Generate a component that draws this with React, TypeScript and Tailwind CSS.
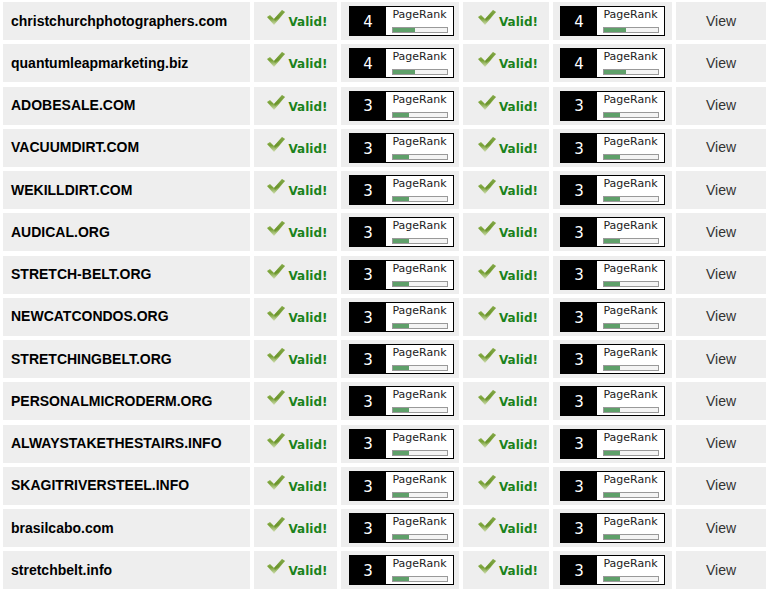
import React from 'react';

type Row = { domain: string; rank: number };

const rows: Row[] = [
  { domain: 'christchurchphotographers.com', rank: 4 },
  { domain: 'quantumleapmarketing.biz', rank: 4 },
  { domain: 'ADOBESALE.COM', rank: 3 },
  { domain: 'VACUUMDIRT.COM', rank: 3 },
  { domain: 'WEKILLDIRT.COM', rank: 3 },
  { domain: 'AUDICAL.ORG', rank: 3 },
  { domain: 'STRETCH-BELT.ORG', rank: 3 },
  { domain: 'NEWCATCONDOS.ORG', rank: 3 },
  { domain: 'STRETCHINGBELT.ORG', rank: 3 },
  { domain: 'PERSONALMICRODERM.ORG', rank: 3 },
  { domain: 'ALWAYSTAKETHESTAIRS.INFO', rank: 3 },
  { domain: 'SKAGITRIVERSTEEL.INFO', rank: 3 },
  { domain: 'brasilcabo.com', rank: 3 },
  { domain: 'stretchbelt.info', rank: 3 },
];

function Check() {
  return (
    <svg width="20" height="18" viewBox="0 0 20 18" className="shrink-0">
      <defs>
        <linearGradient id="chk" x1="0" y1="0" x2="0" y2="1">
          <stop offset="0" stopColor="#b5cf7c" />
          <stop offset="0.55" stopColor="#76a034" />
          <stop offset="1" stopColor="#d3dfb6" />
        </linearGradient>
      </defs>
      <path d="M1 8 L4 6 L8 10 L16 1 L19 3 L8 16 Z" fill="url(#chk)" />
      <path d="M8 10 L16 1 L19 3 L9 12 Z" fill="#5f8a22" opacity="0.55" />
    </svg>
  );
}

function Valid() {
  return (
    <div className="flex items-center justify-center gap-[2px] pl-[3px]">
      <div className="-mt-[6px]">
        <Check />
      </div>
      <span className="mt-[2px] font-['DejaVu_Sans',sans-serif] text-[12px] font-bold text-[#1b821b]">Valid!</span>
    </div>
  );
}

function PageRank({ rank }: { rank: number }) {
  return (
    <div className="flex h-[30px] w-[105px]">
      <div className="flex w-[36px] items-center justify-center bg-black pl-[2px] pt-[2px] font-['DejaVu_Sans',sans-serif] text-[15px] text-white">
        {rank}
      </div>
      <div className="flex flex-1 flex-col items-center border border-black bg-white">
        <span className="mt-[1px] font-['DejaVu_Sans',sans-serif] text-[11px] leading-[14px] text-[#222]">PageRank</span>
        <div className="mt-[5px] h-[6px] w-[56px] border border-[#999] bg-[#f4f4f4]">
          <div className="h-full bg-[#5fa06a]" style={{ width: rank * 5.5 }} />
        </div>
      </div>
    </div>
  );
}

export default function App() {
  return (
    <div className="min-h-[589px] bg-white pl-[3px] pt-[2px]">
      <div className="flex flex-col gap-[4.25px]">
        {rows.map((r) => (
          <div key={r.domain} className="flex h-[38px] gap-[4px]">
            <div className="flex w-[247px] items-center bg-[#eeeeee] pl-[8px] font-['Liberation_Sans',Arial,sans-serif] text-[14px] font-bold text-black">
              {r.domain}
            </div>
            <div className="flex w-[83px] items-center justify-center bg-[#eeeeee]">
              <Valid />
            </div>
            <div className="flex w-[118px] items-center justify-center bg-[#eeeeee] pl-[3px]">
              <PageRank rank={r.rank} />
            </div>
            <div className="flex w-[86px] items-center justify-center bg-[#eeeeee]">
              <Valid />
            </div>
            <div className="flex w-[119px] items-center justify-center bg-[#eeeeee]">
              <PageRank rank={r.rank} />
            </div>
            <div className="flex w-[90px] items-center justify-center bg-[#eeeeee] font-['Liberation_Sans',Arial,sans-serif] text-[14px] text-[#333]">
              View
            </div>
          </div>
        ))}
      </div>
    </div>
  );
}
